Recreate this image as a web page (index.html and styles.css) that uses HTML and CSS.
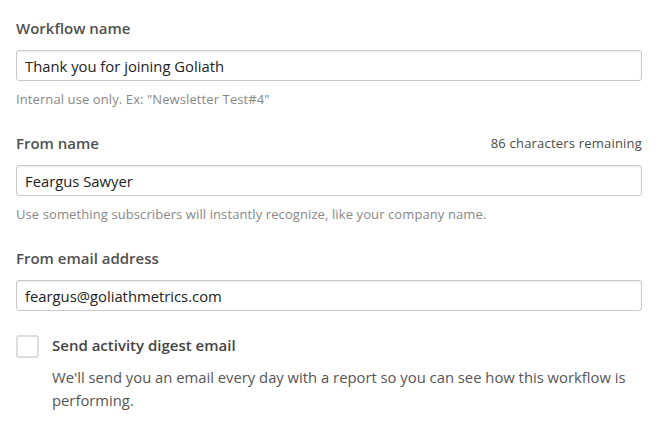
FILE: index.html
```html
<!DOCTYPE html>
<html>
<head>
<meta charset="utf-8">
<link rel="stylesheet" href="styles.css">
</head>
<body>
<form class="form">
  <div class="field">
    <div class="label-row"><label class="label">Workflow name</label></div>
    <input class="input" type="text" value="Thank you for joining Goliath">
    <p class="help">Internal use only. Ex: "Newsletter Test#4"</p>
  </div>
  <div class="field">
    <div class="label-row"><label class="label">From name</label><span class="count">86 characters remaining</span></div>
    <input class="input" type="text" value="Feargus Sawyer">
    <p class="help">Use something subscribers will instantly recognize, like your company name.</p>
  </div>
  <div class="field">
    <div class="label-row"><label class="label">From email address</label></div>
    <input class="input" type="text" value="feargus@goliathmetrics.com">
  </div>
  <div class="check">
    <span class="box"></span>
    <div class="check-body">
      <div class="check-title">Send activity digest email</div>
      <p class="check-desc">We'll send you an email every day with a report so you can see how this workflow is performing.</p>
    </div>
  </div>
</form>
</body>
</html>
```
FILE: styles.css
```css
* { box-sizing: border-box; }
html, body { margin: 0; padding: 0; background: #fff; }
body {
  font-family: "Open Sans", "DejaVu Sans", sans-serif;
  color: #444;
}
.form {
  padding: 18px 19px 0 16px;
  display: flex;
  flex-direction: column;
}
.field { display: flex; flex-direction: column; margin-bottom: 25px; }
.label-row {
  display: flex;
  justify-content: space-between;
  align-items: center;
  height: 20px;
  margin-bottom: 12px;
}
.label { font-size: 15px; font-weight: 600; color: #505050; }
.count { font-size: 13px; font-weight: 400; letter-spacing: 0.2px; color: #4a4a4a; }
.input {
  height: 31px;
  width: 100%;
  border: 1px solid #c8c8c8;
  border-radius: 3px;
  padding: 0 8px;
  font-family: inherit;
  font-size: 14.8px;
  color: #222;
  background: #fff;
  box-shadow: inset 0 1px 2px rgba(0,0,0,0.08);
}
.help {
  margin: 9px 0 0;
  font-size: 13px;
  letter-spacing: 0.1px;
  line-height: 18px;
  color: #888;
}
.check { display: flex; align-items: flex-start; gap: 13px; margin-top: -2px; }
.box {
  width: 23px; height: 23px; flex: none;
  border: 2px solid #ddd;
  border-radius: 3px;
  margin-top: 1px;
}
.check-title { font-size: 15px; font-weight: 600; color: #444; line-height: 22px; }
.check-desc { margin: 10px 0 0; font-size: 14.8px; line-height: 23px; color: #555; }
```
